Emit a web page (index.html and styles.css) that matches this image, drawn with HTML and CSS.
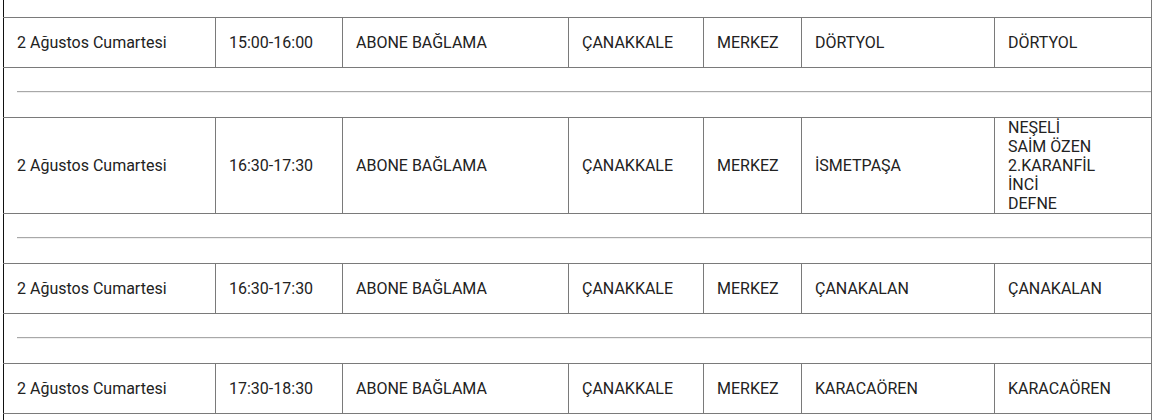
FILE: index.html
```html
<!DOCTYPE html>
<html lang="tr">
<head>
<meta charset="utf-8">
<link rel="stylesheet" href="styles.css">
</head>
<body>
<div class="viewport">
<table class="outages">
  <colgroup>
    <col class="c1"><col class="c2"><col class="c3"><col class="c4"><col class="c5"><col class="c6"><col class="c7">
  </colgroup>
  <tbody>
    <tr class="spacer"><td colspan="7"><hr class="sep"></td></tr>
    <tr class="row">
      <td>2 Ağustos Cumartesi</td><td>15:00-16:00</td><td>ABONE BAĞLAMA</td><td>ÇANAKKALE</td><td>MERKEZ</td><td>DÖRTYOL</td><td>DÖRTYOL</td>
    </tr>
    <tr class="spacer"><td colspan="7"><hr class="sep"></td></tr>
    <tr class="row">
      <td>2 Ağustos Cumartesi</td><td>16:30-17:30</td><td>ABONE BAĞLAMA</td><td>ÇANAKKALE</td><td>MERKEZ</td><td>İSMETPAŞA</td><td class="multi">NEŞELİ<br>SAİM ÖZEN<br>2.KARANFİL<br>İNCİ<br>DEFNE</td>
    </tr>
    <tr class="spacer"><td colspan="7"><hr class="sep"></td></tr>
    <tr class="row">
      <td>2 Ağustos Cumartesi</td><td>16:30-17:30</td><td>ABONE BAĞLAMA</td><td>ÇANAKKALE</td><td>MERKEZ</td><td>ÇANAKALAN</td><td>ÇANAKALAN</td>
    </tr>
    <tr class="spacer"><td colspan="7"><hr class="sep"></td></tr>
    <tr class="row">
      <td>2 Ağustos Cumartesi</td><td>17:30-18:30</td><td>ABONE BAĞLAMA</td><td>ÇANAKKALE</td><td>MERKEZ</td><td>KARACAÖREN</td><td>KARACAÖREN</td>
    </tr>
    <tr class="spacer"><td colspan="7"><hr class="sep"></td></tr>
  </tbody>
</table>
</div>
</body>
</html>
```

FILE: styles.css
```css
html, body {
  margin: 0;
  padding: 0;
  background: #fff;
}

.viewport {
  height: 420px;
  overflow: hidden;
}

.outages {
  margin: -33px 0 0 3px;
  width: 1148px;
  table-layout: fixed;
  border-collapse: collapse;
  font-family: Roboto, "Liberation Sans", sans-serif;
  font-size: 16px;
  line-height: 19px;
  color: #222;
  border-left: 1px solid #111;
}

.c1 { width: 212px; }
.c2 { width: 127px; }
.c3 { width: 226px; }
.c4 { width: 135px; }
.c5 { width: 98px; }
.c6 { width: 193px; }
.c7 { width: 157px; }

.outages td {
  border: 1px solid #7a7a7a;
  padding: 0 13px;
  height: 49px;
  vertical-align: middle;
  text-align: left;
}

.outages tr td:first-child {
  border-left-color: #111;
}

.outages td.multi {
  height: auto;
}

.spacer td {
  padding: 0 0 0 13px;
}

.sep {
  margin: -1px 0 0 0;
  border: 0;
  border-top: 1px solid #a8a8a8;
  border-bottom: 1px solid #efefef;
  height: 0;
}
```
